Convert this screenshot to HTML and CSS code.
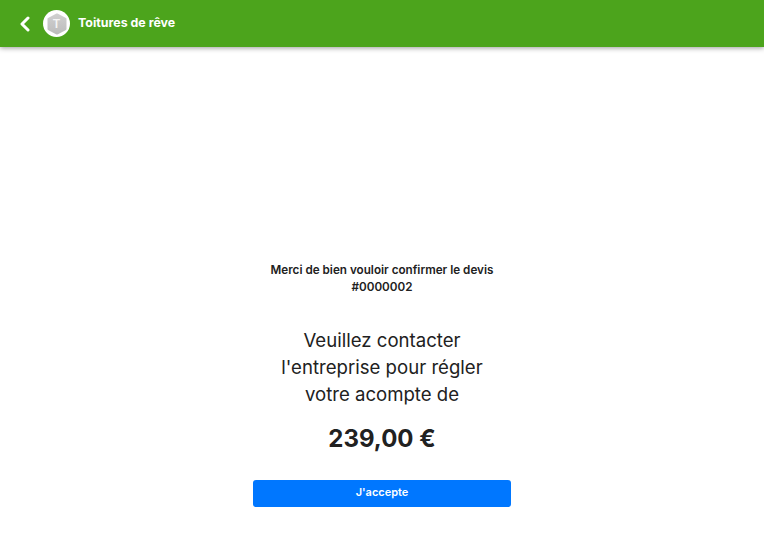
FILE: index.html
```html
<!DOCTYPE html>
<html lang="fr">
<head>
<meta charset="utf-8">
<title>Toitures de rêve</title>
<link rel="stylesheet" href="styles.css">
</head>
<body>
<header class="topbar">
  <svg class="back" width="12" height="16" viewBox="0 0 12 16"><path d="M9 2 L3 8 L9 14" fill="none" stroke="#fff" stroke-width="3" stroke-linecap="round" stroke-linejoin="round"/></svg>
  <div class="avatar"><svg width="22" height="22" viewBox="0 0 22 22"><defs><linearGradient id="hex" x1="0" y1="0" x2="0" y2="1"><stop offset="0" stop-color="#cfcfcf"/><stop offset="1" stop-color="#bdbdbd"/></linearGradient></defs><polygon points="11,1.500 19.500,6 19.500,16 11,20.500 2.500,16 2.500,6" fill="url(#hex)" stroke="url(#hex)" stroke-width="2" stroke-linejoin="round"/></svg><span class="avatar-letter">T</span></div>
  <span class="brand">Toitures de rêve</span>
</header>
<main class="content">
  <p class="notice">Merci de bien vouloir confirmer le devis<br>#0000002</p>
  <p class="message">Veuillez contacter<br>l'entreprise pour régler<br>votre acompte de</p>
  <p class="amount">239,00 €</p>
  <button class="accept">J'accepte</button>
</main>
</body>
</html>
```
FILE: styles.css
```css
* { box-sizing: border-box; }
html, body { margin: 0; height: 100%; background: #fff; }
body { font-family: "Inter", "Liberation Sans", sans-serif; color: #212121; overflow: hidden; }
.topbar { height: 47px; background: #4ca41c; display: flex; align-items: center; padding-left: 19px; box-shadow: 0 1px 5px rgba(0,0,0,.4); }
.back { margin-right: 12px; }
.avatar { position: relative; width: 27px; height: 27px; border-radius: 50%; background: #fff; display: flex; align-items: center; justify-content: center; }
.avatar-letter { position: absolute; color: #f5f5f5; font-size: 12px; font-weight: 600; }
.brand { margin-left: 8px; padding-bottom: 2px; color: #fff; font-size: 12.4px; font-weight: 700; }
.content { display: flex; flex-direction: column; align-items: center; padding-top: 215px; }
.notice { margin: 0; font-size: 11.7px; line-height: 17px; font-weight: 600; text-align: center; }
.message { margin: 31px 0 0; font-size: 18.6px; line-height: 27px; font-weight: 400; text-align: center; }
.amount { margin: 13px 0 0; font-size: 24px; line-height: 35px; font-weight: 700; }
.accept { margin-top: 24px; width: 258px; height: 27px; padding: 0 0 3px; border: 0; border-radius: 3px; background: #0077ff; color: #fff; font: 600 11px "Inter", sans-serif; }
```
